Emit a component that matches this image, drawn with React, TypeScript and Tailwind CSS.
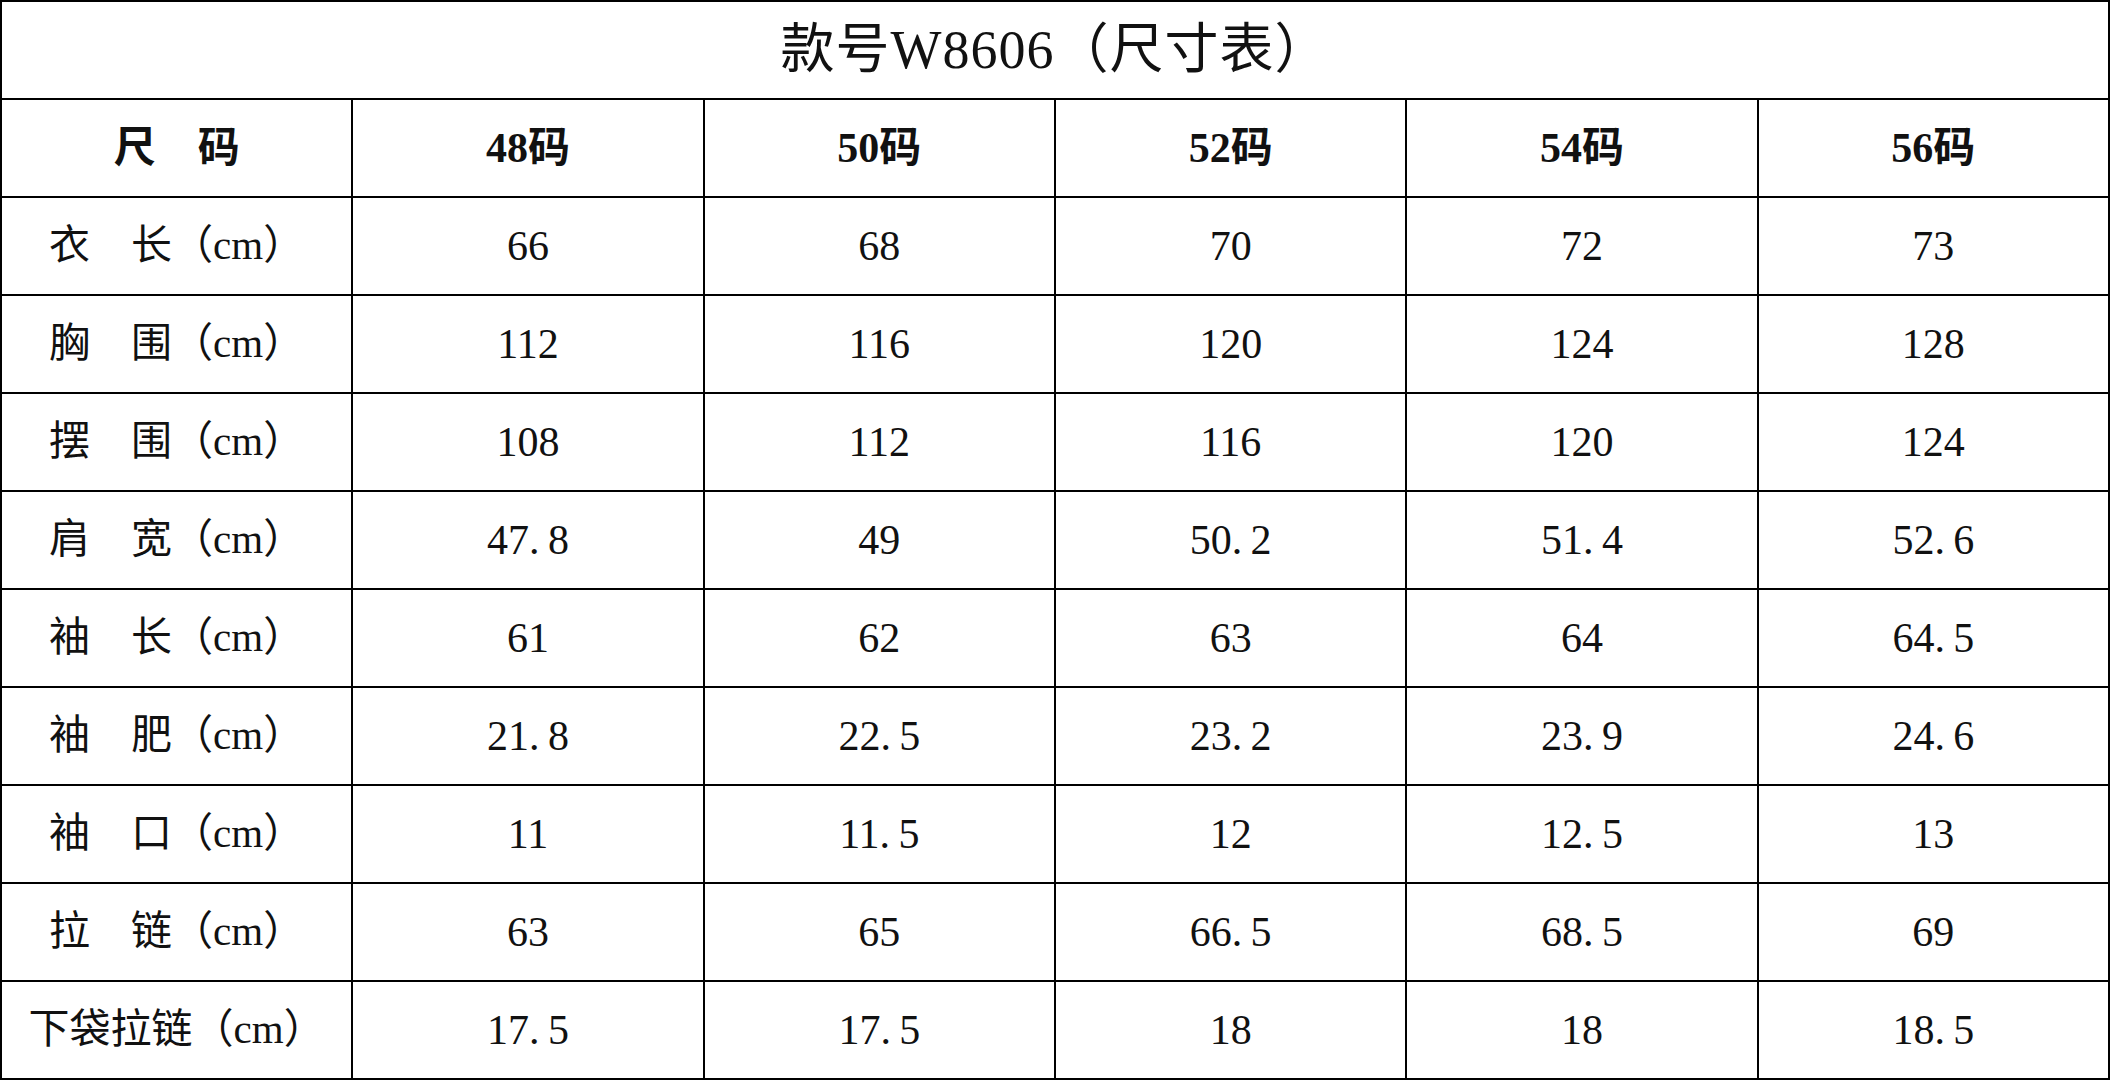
const sizes = ["48码", "50码", "52码", "54码", "56码"];

const rows: { label: string; values: string[] }[] = [
  { label: "衣\u3000长（cm）", values: ["66", "68", "70", "72", "73"] },
  { label: "胸\u3000围（cm）", values: ["112", "116", "120", "124", "128"] },
  { label: "摆\u3000围（cm）", values: ["108", "112", "116", "120", "124"] },
  { label: "肩\u3000宽（cm）", values: ["47.8", "49", "50.2", "51.4", "52.6"] },
  { label: "袖\u3000长（cm）", values: ["61", "62", "63", "64", "64.5"] },
  { label: "袖\u3000肥（cm）", values: ["21.8", "22.5", "23.2", "23.9", "24.6"] },
  { label: "袖\u3000口（cm）", values: ["11", "11.5", "12", "12.5", "13"] },
  { label: "拉\u3000链（cm）", values: ["63", "65", "66.5", "68.5", "69"] },
  { label: "下袋拉链（cm）", values: ["17.5", "17.5", "18", "18", "18.5"] },
];

const cell = "border-2 border-black text-center align-middle p-0";

// the dot takes a half-width slot, like the original spreadsheet font
function Value({ v }: { v: string }) {
  const [a, b] = v.split(".");
  if (b === undefined) return <>{v}</>;
  return (
    <>
      {a}
      <span className="inline-block w-[0.45em] text-left">.</span>
      {b}
    </>
  );
}

export default function App() {
  return (
    <div className="w-[2111px] h-[1080px] bg-white text-[#111] font-['Liberation_Serif','Noto_Sans_CJK_SC',serif]">
      <table className="w-[2110px] h-[1079px] table-fixed border-collapse">
        <tbody>
          <tr className="h-[98px]">
            <td colSpan={6} className={`${cell} text-[54px] tracking-[1px]`}>
              款号W8606（尺寸表）
            </td>
          </tr>
          <tr className="h-[98px]">
            <td className={`${cell} text-[42px] font-bold`}>尺{"\u3000"}码</td>
            {sizes.map((s) => (
              <td key={s} className={`${cell} text-[42px] font-bold`}>
                {s}
              </td>
            ))}
          </tr>
          {rows.map((r) => (
            <tr key={r.label} className="h-[98px]">
              <td className={`${cell} text-[41px]`}>{r.label}</td>
              {r.values.map((v, i) => (
                <td key={i} className={`${cell} text-[42px]`}>
                  <Value v={v} />
                </td>
              ))}
            </tr>
          ))}
        </tbody>
      </table>
    </div>
  );
}
